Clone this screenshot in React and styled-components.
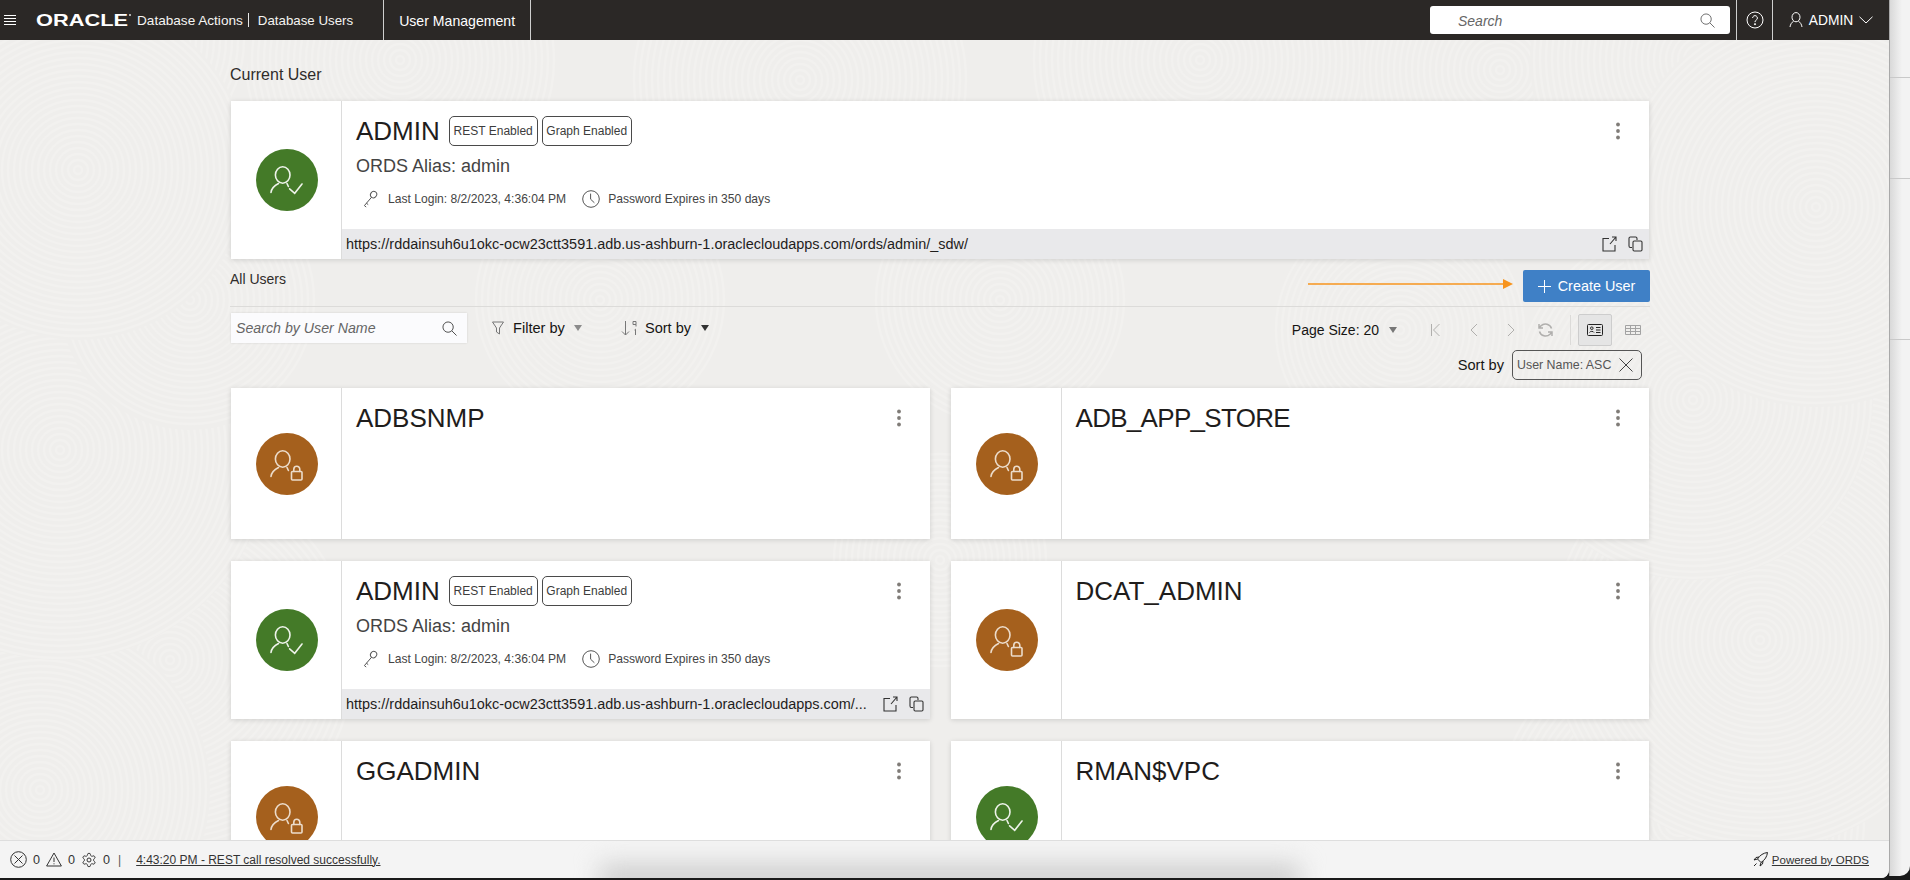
import React, { useMemo } from "react";
import styled, { createGlobalStyle } from "styled-components";

const Global = createGlobalStyle`
  html, body { margin: 0; padding: 0; background: #111; overflow: hidden; }
  * { box-sizing: border-box; }
  body { font-family: "Liberation Sans", Arial, sans-serif; color: #161513; }
`;

const Screen = styled.div`
  display: flex;
  width: 1910px;
  height: 880px;
  overflow: hidden;
  background: #1a1a1a;
`;
const Frame = styled.div`
  width: 1889px;
  height: 878px;
  display: flex;
  flex-direction: column;
  overflow: hidden;
  border-bottom-right-radius: 8px;
  background: #efeeec;
`;
const SideStrip = styled.div`
  flex: 1;
  height: 876px;
  border-left: 1px solid #a9a9a9;
  border-bottom-right-radius: 10px;
  background:
    linear-gradient(#c9c9c9, #c9c9c9) 0 77px / 100% 1px no-repeat,
    linear-gradient(#c9c9c9, #c9c9c9) 0 178px / 100% 1px no-repeat,
    linear-gradient(#c9c9c9, #c9c9c9) 0 339px / 100% 1px no-repeat,
    linear-gradient(90deg, #d9d9d9, #f3f3f3 60%);
`;

/* ---------- header ---------- */
const Header = styled.header`
  flex: none;
  height: 40px;
  display: flex;
  align-items: stretch;
  background: #2b2826;
  color: #fff;
`;
const HeaderCluster = styled.div`
  display: flex;
  align-items: center;
  height: 100%;
`;
const Burger = styled.svg`
  width: 12px;
  height: 12px;
  margin-left: 4px;
`;
const Logo = styled.svg`
  width: 96px;
  height: 16px;
  margin-left: 20px;
  margin-right: 5px;
`;
const AppName = styled.span`
  font-size: ${(p) => p.$size}px;
  white-space: nowrap;
  color: #f5f4f2;
`;
const Pipe = styled.span`
  width: 1px;
  height: 14px;
  margin: 0 9px 0 5px;
  background: #e8e8e8;
`;
const HeaderTab = styled.div`
  display: flex;
  align-items: center;
  margin-left: ${(p) => p.$offset || 0}px;
  padding: 1px 15px 0 15px;
  border-left: 1px solid #cfcfcf;
  border-right: 1px solid #cfcfcf;
  font-size: 14.1px;
  white-space: nowrap;
`;
const HeaderSearch = styled.div`
  width: 300px;
  height: 28px;
  margin: 6px 6px 0 auto;
  display: flex;
  align-items: center;
  justify-content: space-between;
  padding: 1px 15px 0 28px;
  background: #fff;
  border-radius: 3px;
  color: #666;
  font-size: 14px;
  font-style: italic;
`;
const HeaderCell = styled.div`
  display: flex;
  align-items: center;
  justify-content: center;
  width: ${(p) => p.$w}px;
  border-left: 1px solid #cfcfcf;
  gap: ${(p) => p.$gap || 0}px;
  font-size: 13.8px;
`;

/* ---------- main ---------- */
const Main = styled.main`
  position: relative;
  flex: 1;
  min-height: 0;
  overflow: hidden;
  padding: 25px 239px 0 230px;
`;
const Backdrop = styled.svg`
  position: absolute;
  top: -40px;
  left: 0;
  width: 1889px;
  height: 880px;
  pointer-events: none;
`;
const Content = styled.div`
  position: relative;
`;
const SectionTitle = styled.div`
  font-size: 16px;
  line-height: 20px;
  color: #2f2c2a;
`;
const CardSlot = styled.div`
  padding: 0 1px;
  margin-top: 16px;
`;
const Card = styled.article`
  display: flex;
  min-width: 0;
  min-height: ${(p) => p.$min}px;
  background: #fff;
  box-shadow: 0 1px 5px rgba(0, 0, 0, 0.14);
`;
const AvatarCell = styled.div`
  flex: none;
  width: 111px;
  padding-left: 2px;
  display: flex;
  align-items: center;
  justify-content: center;
  border-right: 1px solid #dcdcdc;
`;
const CardBody = styled.div`
  flex: 1;
  min-width: 0;
  display: flex;
  flex-direction: column;
`;
const CardInfo = styled.div`
  flex: 1;
  padding: 15px 26px 0 14px;
`;
const TitleRow = styled.div`
  display: flex;
  align-items: center;
  height: 30px;
  gap: 4px;
`;
const UserName = styled.h3`
  margin: 0 5px 0 0;
  font-size: 26px;
  font-weight: 400;
  color: #1f1d1c;
  line-height: 30px;
  letter-spacing: ${(p) => p.$track || 0}px;
`;
const Badge = styled.span`
  height: 30px;
  padding: 0 3.8px;
  display: flex;
  align-items: center;
  border: 1px solid #4a4a4a;
  border-radius: 5px;
  font-size: 12px;
  color: #3c3c3c;
  white-space: nowrap;
`;
const Dots = styled.svg`
  margin-left: auto;
  width: 10px;
  height: 18px;
`;
const Alias = styled.div`
  margin-top: 9px;
  font-size: 18px;
  line-height: 22px;
  color: #444;
`;
const Meta = styled.div`
  margin-top: 12px;
  padding-left: 7px;
  height: 20px;
  display: flex;
  align-items: center;
  font-size: 12.1px;
  color: #444;
  white-space: nowrap;
`;
const MetaText = styled.span`
  margin: 0 16px 0 ${(p) => p.$gap}px;
`;
const UrlBar = styled.div`
  flex: none;
  height: 30px;
  display: flex;
  align-items: center;
  padding: 0 6px 0 4px;
  background: #e9e9eb;
  font-size: 14.45px;
  color: #1f1d1c;
`;
const UrlText = styled.span`
  flex: 1;
  min-width: 0;
  white-space: nowrap;
`;
const UrlTools = styled.div`
  flex: none;
  display: flex;
  align-items: center;
  gap: 11px;
  margin-left: 9px;
`;
const Glyph = styled.svg`
  flex: none;
  display: block;
`;

const HeadRow = styled.div`
  margin-top: 11px;
  height: 37px;
  display: flex;
  align-items: flex-start;
  border-bottom: 1px solid #dcdbd9;
`;
const SubTitle = styled.div`
  font-size: 14px;
  line-height: 18px;
  color: #2f2c2a;
  margin-right: auto;
`;
const Arrow = styled.svg`
  width: 205px;
  height: 10px;
  margin: 9px 10px 0 0;
`;
const CreateButton = styled.button`
  width: 127px;
  height: 32px;
  padding: 0;
  display: flex;
  align-items: center;
  justify-content: center;
  gap: 7px;
  border: 0;
  border-radius: 2px;
  background: #3f80c6;
  color: #fff;
  font: 14.4px "Liberation Sans", Arial, sans-serif;
`;
const Toolbar = styled.div`
  display: flex;
  align-items: flex-start;
  padding: 6px 0 0 1px;
  height: 39px;
`;
const SearchBox = styled.div`
  width: 236px;
  height: 30px;
  display: flex;
  align-items: center;
  justify-content: space-between;
  padding: 0 10px 0 5px;
  background: #fbfbfd;
  box-shadow: 0 0 2px rgba(0, 0, 0, 0.12);
  font-size: 14.2px;
  font-style: italic;
  color: #666;
`;
const Dropdown = styled.div`
  height: 30px;
  margin-left: ${(p) => p.$ml}px;
  display: flex;
  align-items: center;
  font-size: 14.6px;
  color: #161513;
  white-space: nowrap;
`;
const Caret = styled.span`
  width: 0;
  height: 0;
  margin-left: ${(p) => p.$ml}px;
  margin-right: ${(p) => p.$mr || 0}px;
  border-left: ${(p) => p.$size}px solid transparent;
  border-right: ${(p) => p.$size}px solid transparent;
  border-top: 6px solid ${(p) => p.$color};
`;
const Pager = styled.div`
  margin: 1px 9px 0 auto;
  height: 32px;
  display: flex;
  align-items: center;
  font-size: 14px;
  color: #161513;
`;
const PagerRule = styled.span`
  width: 1px;
  height: 30px;
  margin: 0 7px 0 17px;
  background: #dcdbd9;
`;
const ViewButton = styled.span`
  width: 34px;
  height: 32px;
  margin-right: 13px;
  display: flex;
  align-items: center;
  justify-content: center;
  background: #e5e5e5;
  border: 1px solid #cdcdcd;
  border-radius: 2px;
`;
const SortRow = styled.div`
  margin-top: 4px;
  padding-right: 8px;
  display: flex;
  justify-content: flex-end;
  align-items: center;
  gap: 8px;
  font-size: 14.6px;
`;
const Chip = styled.div`
  width: 130px;
  height: 30px;
  display: flex;
  align-items: center;
  justify-content: space-between;
  padding: 0 8px 0 4px;
  border: 1px solid #555;
  border-radius: 5px;
  font-size: 12.4px;
  color: #555;
  white-space: nowrap;
`;
const CardGrid = styled.div`
  margin-top: 8px;
  padding: 0 1px;
  display: grid;
  grid-template-columns: minmax(0, 1fr) minmax(0, 1fr);
  column-gap: 21px;
  row-gap: 22px;
`;

/* ---------- status bar ---------- */
const StatusBar = styled.footer`
  position: relative;
  flex: none;
  height: 38px;
  display: flex;
  align-items: center;
  padding: 0 20px 0 10px;
  background: #f4f4f4;
  border-top: 1px solid #dedede;
  font-size: 12px;
  color: #333;
  overflow: hidden;
`;
const StatusShade = styled.div`
  position: absolute;
  left: 600px;
  width: 700px;
  bottom: -16px;
  height: 30px;
  background: #cfcfcf;
  filter: blur(12px);
  pointer-events: none;
`;
const StatusIcon = styled(Glyph)`
  position: relative;
`;
const Count = styled.span`
  position: relative;
  margin: 0 6px;
  font-size: 12.6px;
`;
const StatusPipe = styled.span`
  margin: 0 15px 0 2px;
  color: #555;
`;
const StatusLink = styled.a`
  position: relative;
  text-decoration: underline;
  color: #333;
  font-size: ${(p) => p.$size}px;
`;
const PoweredBy = styled.div`
  position: relative;
  margin-left: auto;
  display: flex;
  align-items: center;
  gap: 4px;
`;

/* ---------- drawings ---------- */
const Avatar = ({ locked }) => (
  <Glyph width="62" height="62" viewBox="0 0 62 62">
    <circle cx="31" cy="31" r="31" fill={locked ? "#a5601d" : "#447a28"} />
    <g fill="none" stroke={locked ? "#ecdccb" : "#eef3ea"} strokeWidth="1.6" strokeLinecap="round">
      <ellipse cx="26.7" cy="26" rx="7.3" ry="8.2" />
      <path d="M22.5 34.500C18.500 36.500 15.500 39 15 43.500M31 34.500l1.400 3" />
      {locked ? (
        <>
          <rect x="35.500" y="38.500" width="10.500" height="8.500" rx="1" />
          <path d="M37.800 38.500v-2.200a3 3 0 0 1 6 0v2.200" />
        </>
      ) : (
        <path d="M33.600 39.800l5.100 4.500 7.300-9.300" />
      )}
    </g>
  </Glyph>
);
const MenuDots = () => (
  <Dots viewBox="0 0 10 18">
    <circle cx="5" cy="2.500" r="1.900" fill="#807c78" />
    <circle cx="5" cy="9" r="1.900" fill="#807c78" />
    <circle cx="5" cy="15.500" r="1.900" fill="#807c78" />
  </Dots>
);
const KeyIcon = () => (
  <Glyph width="15" height="18" viewBox="0 0 15 18" fill="none" stroke="#555" strokeWidth="1">
    <ellipse cx="10.600" cy="4.600" rx="3" ry="3.300" transform="rotate(35 10.600 4.600)" />
    <path d="M8.600 7.200L1.400 15.600M1.400 15.600l1.800 1.400M3.400 13.200l1.800 1.400" />
  </Glyph>
);
const ClockIcon = () => (
  <Glyph width="18" height="18" viewBox="0 0 18 18" fill="none" stroke="#555" strokeWidth="1">
    <circle cx="9" cy="9" r="8.300" />
    <path d="M8.600 3.600v5.600l3.800 3.600" />
  </Glyph>
);
const OpenIcon = () => (
  <Glyph width="15" height="16" viewBox="0 0 15 16" fill="none" stroke="#333" strokeWidth="1.100">
    <path d="M7 2.500H1v12.500h12V9M8 8l6-7M10 1h4v4" />
  </Glyph>
);
const CopyIcon = () => (
  <Glyph width="15" height="16" viewBox="0 0 15 16" fill="none" stroke="#333" strokeWidth="1.100">
    <path d="M4 11.500H2.400a1.400 1.400 0 0 1-1.400-1.400V2.400A1.400 1.400 0 0 1 2.400 1h5.200A1.400 1.400 0 0 1 9 2.400V4" />
    <rect x="5" y="5" width="9" height="10" rx="1.200" />
  </Glyph>
);
const SearchIcon = ({ size = 16, color = "#555" }) => (
  <Glyph width={size} height={size} viewBox="0 0 16 16" fill="none" stroke={color} strokeWidth="1">
    <circle cx="6.500" cy="6.500" r="5.500" />
    <path d="M10.500 10.500L15.500 15.500" />
  </Glyph>
);
const PagerGlyph = styled(Glyph)`
  margin-right: ${(p) => p.$mr || 0}px;
`;
const PagerIcon = ({ d, w = 9, mr, sw = 1 }) => (
  <PagerGlyph width={w} height="14" viewBox={`0 0 ${w} 14`} fill="none" stroke="#b0afad" strokeWidth={sw} $mr={mr}>
    <path d={d} />
  </PagerGlyph>
);
const DropGlyph = styled(Glyph)`
  margin-right: ${(p) => p.$mr}px;
`;

const UserCard = ({ name, locked, url, min, track }) => (
  <Card $min={min}>
    <AvatarCell>
      <Avatar locked={locked} />
    </AvatarCell>
    <CardBody>
      <CardInfo>
        <TitleRow>
          <UserName $track={track}>{name}</UserName>
          {url && <Badge>REST Enabled</Badge>}
          {url && <Badge>Graph Enabled</Badge>}
          <MenuDots />
        </TitleRow>
        {url && <Alias>ORDS Alias: admin</Alias>}
        {url && (
          <Meta>
            <KeyIcon />
            <MetaText $gap={10}>Last Login: 8/2/2023, 4:36:04 PM</MetaText>
            <ClockIcon />
            <MetaText $gap={8}>Password Expires in 350 days</MetaText>
          </Meta>
        )}
      </CardInfo>
      {url && (
        <UrlBar>
          <UrlText>{url}</UrlText>
          <UrlTools>
            <OpenIcon />
            <CopyIcon />
          </UrlTools>
        </UrlBar>
      )}
    </CardBody>
  </Card>
);

const swirlCentres = [
  [800, 80, 170], [1200, 60, 170], [1500, 70, 140], [400, 60, 160], [600, 300, 130],
  [1000, 300, 130], [1400, 330, 130], [940, 560, 110], [1680, 820, 190], [170, 660, 190],
  [40, 790, 170], [60, 450, 210], [190, 300, 130], [120, 40, 130], [78, 170, 170],
  [1860, 480, 150], [1760, 640, 210], [1700, 60, 170], [1693, 400, 180], [1816, 207, 200],
];

const Swirls = () => {
  const rings = useMemo(
    () =>
      swirlCentres.map(([cx, cy, max]) => {
        const radii = [];
        for (let r = 4; r < max; r += 6) radii.push(r);
        return { cx, cy, max, radii };
      }),
    []
  );
  return (
    <Backdrop viewBox="0 0 1889 880">
      {rings.map((s, i) => (
        <g key={i}>
          <circle cx={s.cx} cy={s.cy} r={s.max} fill="#efeeec" />
          {s.radii.map((r) => (
            <circle key={r} cx={s.cx} cy={s.cy} r={r} fill="none" stroke="#f2f1ef" strokeWidth="2.400" />
          ))}
        </g>
      ))}
    </Backdrop>
  );
};

const BASE_URL = "https://rddainsuh6u1okc-ocw23ctt3591.adb.us-ashburn-1.oraclecloudapps.com/";

export default function App() {
  return (
    <Screen>
      <Global />
      <Frame>
        <Header>
          <HeaderCluster>
            <Burger viewBox="0 0 12 12" stroke="#fff" strokeWidth="1">
              <path d="M0 1.500h12M0 4.500h12M0 7.500h12M0 10.500h12" />
            </Burger>
            <Logo viewBox="0 0 96 16">
              <text
                x="0"
                y="14"
                fontFamily="Liberation Sans"
                fontWeight="700"
                fontSize="16.500"
                fill="#fff"
                textLength="92"
                lengthAdjust="spacingAndGlyphs"
              >
                ORACLE
              </text>
              <circle cx="94" cy="3" r="1" fill="#ddd" />
            </Logo>
            <AppName $size={13.6}>Database Actions</AppName>
            <Pipe />
            <AppName $size={13.3}>Database Users</AppName>
          </HeaderCluster>
          <HeaderTab $offset={30}>User Management</HeaderTab>
          <HeaderSearch>
            Search
            <SearchIcon size={15} color="#666" />
          </HeaderSearch>
          <HeaderCell $w={36}>
            <Glyph width="18" height="18" viewBox="0 0 18 18" fill="none" stroke="#fff" strokeWidth="1">
              <circle cx="9" cy="9" r="8" />
              <path d="M6.600 7a2.400 2.400 0 1 1 3.600 2.100c-.8.500-1.200 1-1.200 2" />
              <circle cx="9" cy="13.200" r=".6" fill="#fff" />
            </Glyph>
          </HeaderCell>
          <HeaderCell $w={117} $gap={6}>
            <Glyph width="14" height="16" viewBox="0 0 14 16" fill="none" stroke="#fff" strokeWidth="1">
              <ellipse cx="7" cy="5.200" rx="4" ry="4.600" />
              <path d="M4.600 9.200C2.600 10.400 1.400 12.400 1 15M9.400 9.200c2 1.200 3.200 3.200 3.600 5.800" />
            </Glyph>
            ADMIN
            <Glyph width="14" height="8" viewBox="0 0 14 8" fill="none" stroke="#fff" strokeWidth="1">
              <path d="M.5.800L7 7l6.500-6.200" />
            </Glyph>
          </HeaderCell>
        </Header>

        <Main>
          <Swirls />
          <Content>
            <SectionTitle>Current User</SectionTitle>
            <CardSlot>
              <UserCard name="ADMIN" url={`${BASE_URL}ords/admin/_sdw/`} min={158} />
            </CardSlot>

            <HeadRow>
              <SubTitle>All Users</SubTitle>
              <Arrow viewBox="0 0 205 10">
                <path d="M0 5H195" stroke="#f7941e" strokeWidth="1.400" />
                <path d="M195 0l10 5-10 5z" fill="#f7941e" />
              </Arrow>
              <CreateButton>
                <Glyph width="13" height="13" viewBox="0 0 13 13" stroke="#fff" strokeWidth="1">
                  <path d="M6.500 0v13M0 6.500h13" />
                </Glyph>
                Create User
              </CreateButton>
            </HeadRow>

            <Toolbar>
              <SearchBox>
                Search by User Name
                <SearchIcon size={15} color="#444" />
              </SearchBox>
              <Dropdown $ml={25}>
                <DropGlyph width="12" height="14" viewBox="0 0 12 14" fill="none" stroke="#777" strokeWidth="1" $mr={9}>
                  <path d="M.5 1h11L7.500 7v6L4.500 11V7z" />
                </DropGlyph>
                Filter by
                <Caret $ml={9} $size={4.5} $color="#8b8b8b" />
              </Dropdown>
              <Dropdown $ml={39}>
                <DropGlyph width="17" height="16" viewBox="0 0 17 16" fill="none" stroke="#777" strokeWidth="1" $mr={7}>
                  <path d="M4.500 1v14M1 11.500L4.500 15 8 11.500M12 1.500h3v3h-3zM15 4.500v2M13.500 10l1-.8v5.800" />
                </DropGlyph>
                Sort by
                <Caret $ml={10} $size={4} $color="#333" />
              </Dropdown>
              <Pager>
                Page Size: 20
                <Caret $ml={10} $mr={34} $size={4} $color="#777" />
                <PagerIcon d="M.5 1v12M8.500 1L2.500 7l6 6" mr={29} />
                <PagerIcon d="M8 1L2 7l6 6" mr={29} />
                <PagerIcon d="M1 1l6 6-6 6" mr={22} />
                <PagerIcon w={15} sw={1.5} d="M13.500 5.500A6.300 6.300 0 0 0 3 2.800L1 5M1.500 8.500A6.300 6.300 0 0 0 12 11.200L14 9M1 1v4h4M14 13V9h-4" />
                <PagerRule />
                <ViewButton>
                  <Glyph width="16" height="12" viewBox="0 0 16 12" fill="none" stroke="#222" strokeWidth="1">
                    <rect x=".5" y=".5" width="15" height="11" rx="1" />
                    <circle cx="4.800" cy="4.200" r="1.300" />
                    <path d="M2.500 8.500c.5-1.500 4-1.500 4.500 0M9 3.500h4.500M9 6h4.500M9 8.500h4.500" />
                  </Glyph>
                </ViewButton>
                <Glyph width="16" height="10" viewBox="0 0 16 10" fill="none" stroke="#a3a3a3" strokeWidth="1">
                  <path d="M.5.500h15v9H.5zM.5 3.500h15M.5 6.500h15M5.500.500v9M10.500.500v9" />
                </Glyph>
              </Pager>
            </Toolbar>

            <SortRow>
              Sort by
              <Chip>
                User Name: ASC
                <Glyph width="14" height="14" viewBox="0 0 14 14" stroke="#444" strokeWidth="1">
                  <path d="M.5.500l13 13M13.500.500l-13 13" />
                </Glyph>
              </Chip>
            </SortRow>

            <CardGrid>
              <UserCard name="ADBSNMP" locked min={151} />
              <UserCard name="ADB_APP_STORE" locked min={151} track={-0.7} />
              <UserCard name="ADMIN" url={`${BASE_URL}...`} min={158} />
              <UserCard name="DCAT_ADMIN" locked min={158} />
              <UserCard name="GGADMIN" locked min={151} />
              <UserCard name="RMAN$VPC" min={151} />
            </CardGrid>
          </Content>
        </Main>

        <StatusBar>
          <StatusShade />
          <StatusIcon width="17" height="17" viewBox="0 0 17 17" fill="none" stroke="#333" strokeWidth="1">
            <circle cx="8.500" cy="8.500" r="7.800" />
            <path d="M4.500 4.500l8 8M12.500 4.500l-8 8" />
          </StatusIcon>
          <Count>0</Count>
          <StatusIcon width="16" height="15" viewBox="0 0 16 15" fill="none" stroke="#333" strokeWidth="1">
            <path d="M8 1l7.400 13H.6zM8 5.500v4.500M8 11.300v1" />
          </StatusIcon>
          <Count>0</Count>
          <StatusIcon width="16" height="16" viewBox="0 0 24 24" fill="none" stroke="#333" strokeWidth="1.5">
            <path d="M12.220 2h-.44a2 2 0 0 0-2 2v.18a2 2 0 0 1-1 1.730l-.43.250a2 2 0 0 1-2 0l-.150-.080a2 2 0 0 0-2.730.730l-.220.380a2 2 0 0 0 .730 2.730l.150.100a2 2 0 0 1 1 1.720v.510a2 2 0 0 1-1 1.740l-.150.090a2 2 0 0 0-.730 2.730l.220.380a2 2 0 0 0 2.730.730l.150-.080a2 2 0 0 1 2 0l.430.250a2 2 0 0 1 1 1.730V20a2 2 0 0 0 2 2h.440a2 2 0 0 0 2-2v-.180a2 2 0 0 1 1-1.730l.430-.250a2 2 0 0 1 2 0l.150.080a2 2 0 0 0 2.730-.730l.220-.390a2 2 0 0 0-.730-2.730l-.150-.080a2 2 0 0 1-1-1.740v-.500a2 2 0 0 1 1-1.740l.150-.090a2 2 0 0 0 .730-2.730l-.220-.380a2 2 0 0 0-2.730-.730l-.150.080a2 2 0 0 1-2 0l-.430-.250a2 2 0 0 1-1-1.730V4a2 2 0 0 0-2-2z" />
            <circle cx="12" cy="12" r="3" />
          </StatusIcon>
          <Count>0</Count>
          <StatusPipe>|</StatusPipe>
          <StatusLink $size={12}>4:43:20 PM - REST call resolved successfully.</StatusLink>
          <PoweredBy>
            <Glyph width="15" height="15" viewBox="0 0 15 15" fill="none" stroke="#222" strokeWidth="1">
              <path d="M14.500.500C10.500 1 7 3 4.500 7L8 10.500C12 8 14 4.500 14.500.500zM4.500 7L1 8l2-2.500 3-.5M8 10.500L7 14l2.500-2 .5-3M3.500 11.500L1 14" />
            </Glyph>
            <StatusLink $size={11.5}>Powered by ORDS</StatusLink>
          </PoweredBy>
        </StatusBar>
      </Frame>
      <SideStrip />
    </Screen>
  );
}
